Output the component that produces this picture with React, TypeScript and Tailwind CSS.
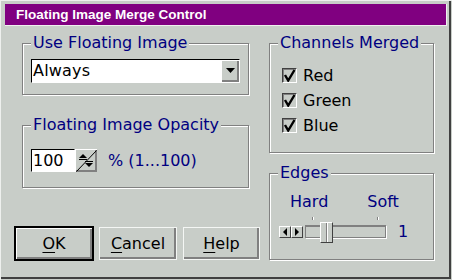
import React from "react";

const face = "bg-[#c8cdc8]";

function Group({
  title,
  className,
  children,
}: {
  title: string;
  className: string;
  children: React.ReactNode;
}) {
  return (
    <fieldset
      className={`border border-[#808080] shadow-[1px_1px_0_#fff,inset_1px_1px_0_#fff] ${className}`}
    >
      <legend className={`px-[2px] ${face} text-[#000080] text-[16px] leading-[18px]`}>
        {title}
      </legend>
      {children}
    </fieldset>
  );
}

function Check({ label }: { label: string }) {
  return (
    <div className="h-[25px] flex items-center">
      <div className="w-[15px] h-[15px] ml-[12px] border border-t-[#404040] border-l-[#404040] border-r-white border-b-white shadow-[inset_1px_1px_0_#808080]">
        <svg width="13" height="13" viewBox="0 0 13 13">
          <path d="M2 6 L5.2 11.5 L11.5 1" fill="none" stroke="#000" strokeWidth="2.4" />
        </svg>
      </div>
      <span className="ml-[6px] text-[16px] leading-[18px] text-black">{label}</span>
    </div>
  );
}

function Btn({
  children,
  isDefault,
  width,
}: {
  children: React.ReactNode;
  isDefault?: boolean;
  width: string;
}) {
  if (isDefault) {
    return (
      <div className={`${width} h-[35px] border-2 border-black`}>
        <div className="w-full h-full flex items-center justify-center shadow-[inset_1px_1px_0_#fff,inset_-2px_-2px_0_#808080] text-[16px] text-black">
          {children}
        </div>
      </div>
    );
  }
  return (
    <div
      className={`${width} h-[33px] mt-[1px] border border-[#f4f6f4] flex items-center justify-center shadow-[inset_-2px_-2px_0_#808080] text-[16px] text-black`}
    >
      {children}
    </div>
  );
}

function SmallArrow({ dir }: { dir: "l" | "r" }) {
  return (
    <div className="w-[12px] h-[12px] border border-t-white border-l-white border-r-[#404040] border-b-[#404040] flex items-center justify-center">
      <svg width="6" height="8" viewBox="0 0 6 8">
        {dir === "l" ? (
          <path d="M5 0 L1 4 L5 8 Z" fill="#000" />
        ) : (
          <path d="M1 0 L5 4 L1 8 Z" fill="#000" />
        )}
      </svg>
    </div>
  );
}

export default function App() {
  return (
    <div
      className={`w-[452px] h-[280px] ${face} overflow-hidden pt-[4px] font-['DejaVu_Sans',sans-serif] shadow-[inset_1px_1px_0_#eef0ee,inset_-1px_-1px_0_#c8cdc8,inset_-3px_-3px_0_#404040]`}
    >
      <div className="mx-[5px] h-[22px] bg-[#800080] border-r border-b border-[#eef0ee] pl-[11px] text-white font-bold text-[13.5px] leading-[21px] font-['Liberation_Sans',Arial,sans-serif]">
        Floating Image Merge Control
      </div>

      <div className="flex pl-[14px] pt-[8px]">
        <div className="w-[246px] flex flex-col">
          <Group title="Use Floating Image" className="ml-[8px] w-[227px] px-[8px] pt-[7px] pb-[11px]">
            <div className="flex h-[24px] border border-t-black border-l-black border-r-white border-b-white">
              <div className="flex-1 bg-white pl-[1px] text-[16px] leading-[22px] tracking-[0.2px] text-black">
                Always
              </div>
              <div className="w-[18px] h-full bg-[#c8cdc8] border-t border-l border-white shadow-[inset_-2px_-2px_0_#808080] flex items-center justify-center">
                <svg width="9" height="5" viewBox="0 0 9 5" className="mb-[2px]">
                  <path d="M0 0 H9 L4.5 5 Z" fill="#000" />
                </svg>
              </div>
            </div>
          </Group>

          <Group title="Floating Image Opacity" className="ml-[8px] mt-[21px] w-[227px] px-[8px] pt-[15px] pb-[15px]">
            <div className="flex items-center">
              <div className="w-[44px] h-[23px] bg-white border border-t-black border-l-black border-r-white border-b-white pl-[1px] text-[16px] leading-[21px] text-black">
                100
              </div>
              <div className="w-[22px] h-[23px] border-t border-l border-white shadow-[inset_-2px_-2px_0_#808080]">
                <svg width="21" height="22" viewBox="0 0 21 22">
                  <path d="M0.5 21.5 L20.5 0.5" stroke="#000" strokeWidth="1" />
                  <path d="M3 8 L7 4 L11 8 Z" fill="#000" />
                  <path d="M3 9.5 H11" stroke="#000" strokeWidth="1" />
                  <path d="M9 13 H17 L13 17 Z" fill="#000" />
                  <path d="M9 11.5 H17" stroke="#000" strokeWidth="1" />
                </svg>
              </div>
              <span className="ml-[11px] text-[16px] leading-[18px] text-[#000080]">% (1...100)</span>
            </div>
          </Group>

          <div className="flex mt-[38px]">
            <Btn isDefault width="w-[80px]">
              <span className="underline underline-offset-[3px]">O</span>K
            </Btn>
            <div className="ml-[5px]">
              <Btn width="w-[78px]">
                <span className="underline underline-offset-[3px]">C</span>ancel
              </Btn>
            </div>
            <div className="ml-[6px]">
              <Btn width="w-[77px]">
                <span className="underline underline-offset-[3px]">H</span>elp
              </Btn>
            </div>
          </div>
        </div>

        <div className="ml-[9px] flex flex-col">
          <Group title="Channels Merged" className="w-[165px] pl-[8px] pt-[11px] pb-[14px]">
            <div className="-ml-[8px] flex flex-col">
              <Check label="Red" />
              <Check label="Green" />
              <Check label="Blue" />
            </div>
          </Group>

          <Group title="Edges" className="mt-[11px] w-[165px] pl-[8px] pt-[11px] pb-[17px]">
            <div className="-ml-[8px] flex flex-col">
              <div className="flex h-[18px] text-[16px] leading-[18px] text-[#000080]">
                <span className="ml-[20px]">Hard</span>
                <span className="ml-[39px]">Soft</span>
              </div>
              <div className="flex h-[4px] mt-[6px]">
                <div className="ml-[42px] w-[2px] h-[3px] border-l border-[#808080] bg-white" />
                <div className="ml-[63px] w-[2px] h-[3px] border-l border-[#808080] bg-white" />
              </div>
              <div className="flex items-center h-[21px]">
                <div className="ml-[9px] flex">
                  <SmallArrow dir="l" />
                  <SmallArrow dir="r" />
                </div>
                <div className="relative ml-[2px] w-[81px] h-[13px] bg-[#c8cdc8] border border-[#808080] border-t-2 shadow-[1px_1px_0_#fff]">
                  <div className="absolute left-[14px] top-[-5px] w-[13px] h-[21px] bg-[#c8cdc8] border border-t-white border-l-white border-r-[#404040] border-b-[#404040] flex justify-center">
                    <div className="w-[1px] h-full bg-[#808080]" />
                    <div className="w-[1px] h-full bg-white" />
                  </div>
                </div>
                <span className="ml-[12px] text-[16px] leading-[18px] text-[#000080]">1</span>
              </div>
            </div>
          </Group>
        </div>
      </div>
    </div>
  );
}
